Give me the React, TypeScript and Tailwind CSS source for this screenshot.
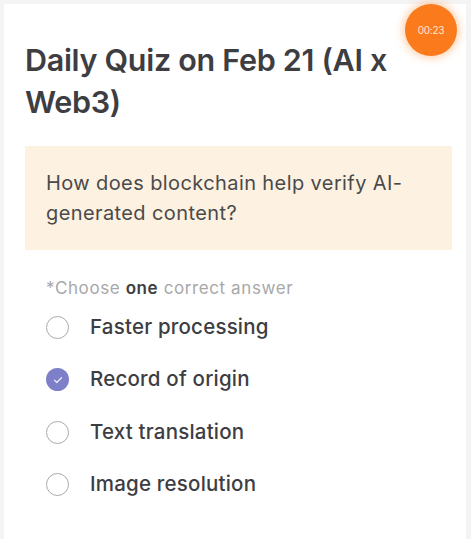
import React from 'react';

const options = [
  { id: 'a', label: 'Faster processing' },
  { id: 'b', label: 'Record of origin' },
  { id: 'c', label: 'Text translation' },
  { id: 'd', label: 'Image resolution' },
];

export default function App() {
  const selected = 'b';

  return (
    <div
      className="w-[471px] h-[539px] overflow-hidden bg-[#f4f4f4] pl-[4px] pt-[4px] pr-[5px]"
      style={{ fontFamily: 'Inter, "Noto Sans", sans-serif' }}
    >
      <div className="relative bg-white h-full pl-[21px] pr-[14px]">
        {/* timer */}
        <div className="absolute right-[9px] top-0 w-[52px] h-[52px] rounded-full bg-[#fb7a1c] shadow-[0_0_8px_2px_rgba(251,146,60,0.45)] flex items-center justify-center">
          <span className="text-[10px] text-[#fde6d2] tracking-tight">00:23</span>
        </div>

        <h1 className="pt-[35px] text-[30.5px] leading-[42px] font-semibold text-[#3d3d42] tracking-[-0.3px] whitespace-nowrap">
          Daily Quiz on Feb 21 (AI x
          <br />
          Web3)
        </h1>

        <div className="mt-[23px] bg-[#fdf1e1] px-[21px] pt-[22px] h-[104px]">
          <p className="text-[20px] leading-[30px] text-[#4a4a4a] tracking-[0.4px]">
            How does blockchain help verify AI-
            <br />
            generated content?
          </p>
        </div>

        <p className="mt-[27px] pl-[21px] text-[17px] leading-[22px] text-[#a8a8a8] tracking-[0.6px]">
          *Choose <span className="font-semibold text-[#3d3d42]">one</span> correct answer
        </p>

        <div className="mt-[16px] pl-[21px] flex flex-col gap-[28.5px]">
          {options.map((o) => {
            const on = o.id === selected;
            return (
              <div key={o.id} className="flex items-center h-[24px]">
                {on ? (
                  <div className="w-[23px] h-[23px] rounded-full bg-[#7d80c8] flex items-center justify-center">
                    <svg width="12" height="12" viewBox="0 0 24 24" fill="none" stroke="#e8e9f7" strokeWidth="2.5" strokeLinecap="round" strokeLinejoin="round">
                      <path d="M5 12.5l4.5 4.5L19 7.5" />
                    </svg>
                  </div>
                ) : (
                  <div className="w-[23px] h-[23px] rounded-full border-[1.5px] border-[#a9a9a9]" />
                )}
                <span className="ml-[21px] text-[20.5px] font-medium text-[#3d3d42] tracking-[0.2px]">{o.label}</span>
              </div>
            );
          })}
        </div>
      </div>
    </div>
  );
}
